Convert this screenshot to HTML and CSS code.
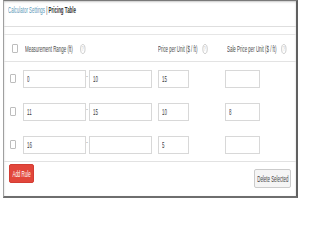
FILE: index.html
```html
<!DOCTYPE html>
<html>
<head>
<meta charset="utf-8">
<link rel="stylesheet" href="styles.css">
</head>
<body>
<div class="panel">
  <div class="head">
    <span class="sq"><span class="crumb">Calculator Settings</span> | <b>Pricing Table</b></span>
  </div>
  <div class="table">
    <div class="row thead">
      <span class="cb cb-head"></span>
      <div class="th th-range"><span class="sq">Measurement Range (ft)<i class="info">?</i></span></div>
      <div class="th"><span class="sq">Price per Unit ($ / ft)<i class="info info-s">?</i></span></div>
      <div class="th th-sale"><span class="sq">Sale Price per Unit ($ / ft)<i class="info info-s">?</i></span></div>
    </div>
    <div class="row">
      <span class="cb"></span>
      <div class="range"><div class="inp w-range"><span class="sq">0</span></div><span class="dash">-</span><div class="inp w-range"><span class="sq">10</span></div></div>
      <div class="cell"><div class="inp w-price"><span class="sq">15</span></div></div>
      <div class="cell"><div class="inp w-sale"><span class="sq"></span></div></div>
    </div>
    <div class="row">
      <span class="cb"></span>
      <div class="range"><div class="inp w-range"><span class="sq">11</span></div><span class="dash">-</span><div class="inp w-range"><span class="sq">15</span></div></div>
      <div class="cell"><div class="inp w-price"><span class="sq">10</span></div></div>
      <div class="cell"><div class="inp w-sale"><span class="sq">8</span></div></div>
    </div>
    <div class="row">
      <span class="cb"></span>
      <div class="range"><div class="inp w-range"><span class="sq">16</span></div><span class="dash">-</span><div class="inp w-range"><span class="sq"></span></div></div>
      <div class="cell"><div class="inp w-price"><span class="sq">5</span></div></div>
      <div class="cell"><div class="inp w-sale"><span class="sq"></span></div></div>
    </div>
  </div>
  <div class="foot">
    <button class="btn btn-add"><span class="sq">Add Rule</span></button>
    <button class="btn btn-del"><span class="sq">Delete Selected</span></button>
  </div>
</div>
</body>
</html>
```
FILE: styles.css
```css
html, body {
  margin: 0;
  padding: 0;
  background: #ffffff;
}
body {
  width: 300px;
  height: 200px;
  overflow: hidden;
  font-family: "Liberation Sans", Arial, sans-serif;
  font-size: 9px;
  color: #4a4a4a;
}
.panel {
  box-sizing: border-box;
  margin-left: 3px;
  width: 295px;
  height: 198px;
  border-top: 1px solid #7a7a7a;
  border-left: 1px solid #a0a0a0;
  border-right: 2px solid #606060;
  border-bottom: 2px solid #6e6e6e;
  box-shadow: inset 0 1px 2px rgba(0,0,0,0.22);
  background: #fff;
  display: flex;
  flex-direction: column;
  overflow: hidden;
}
.sq {
  display: inline-block;
  transform: scaleX(0.49);
  transform-origin: left center;
  white-space: nowrap;
  line-height: 12px;
}
.head {
  height: 26px;
  padding: 3px 0 0 4px;
  box-sizing: border-box;
  border-bottom: 1px solid #dedede;
  color: #444;
  overflow: hidden;
}
.crumb {
  color: #5a96b6;
}
.head b {
  color: #2e2e2e;
  font-weight: bold;
}
.table {
  margin-top: 7px;
  border-top: 1px solid #e6e6e6;
}
.row {
  display: grid;
  grid-template-columns: 13px 135px 67px 1fr;
  align-items: center;
  height: 33px;
  padding-left: 6px;
}
.thead {
  height: 27px;
  border-bottom: 1px solid #e3e3e3;
  padding-top: 1px;
  box-sizing: border-box;
}
.th {
  color: #4a4a4a;
  overflow: hidden;
  min-width: 0;
}
.th-range, .th-sale {
  padding-left: 2px;
}
.cb {
  display: block;
  box-sizing: border-box;
  width: 6px;
  height: 9px;
  border: 1px solid #bdbdbd;
  border-radius: 1px;
  background: #fff;
}
.cb-head {
  margin-left: 2px;
}
.info {
  display: inline-block;
  box-sizing: border-box;
  width: 10px;
  height: 10px;
  margin-left: 15px;
  border: 1px solid #bdbdbd;
  border-radius: 50%;
  font-style: normal;
  font-size: 7px;
  line-height: 8px;
  text-align: center;
  color: #b5b5b5;
  vertical-align: middle;
}
.info-s {
  margin-left: 10px;
}
.range {
  display: flex;
  align-items: center;
}
.dash {
  width: 3px;
  font-size: 6px;
  line-height: 6px;
  color: #777;
  margin-top: -6px;
  overflow: hidden;
}
.inp {
  box-sizing: border-box;
  height: 18px;
  border: 1px solid #d8d8d8;
  background: #fff;
  padding-left: 3px;
  display: flex;
  align-items: center;
  color: #3e3e3e;
  overflow: hidden;
}
.w-range { width: 63px; }
.w-price { width: 31px; }
.w-sale { width: 35px; }
.foot {
  flex: 1;
  border-top: 1px solid #e2e2e2;
  display: flex;
  align-items: flex-start;
  justify-content: space-between;
  padding: 2px 5px 0 5px;
}
.btn {
  box-sizing: border-box;
  height: 19px;
  margin: 0;
  padding: 0;
  display: flex;
  align-items: center;
  justify-content: center;
  font-family: inherit;
  font-size: 9px;
  border-radius: 2px;
  overflow: hidden;
}
.btn .sq {
  transform-origin: center center;
}
.btn-add {
  width: 25px;
  background: #e2463b;
  border: 1px solid #d33d33;
  color: #fff;
}
.btn-del {
  width: 37px;
  margin-top: 5px;
  background: #f5f5f5;
  border: 1px solid #cbcbcb;
  color: #444;
}
```
